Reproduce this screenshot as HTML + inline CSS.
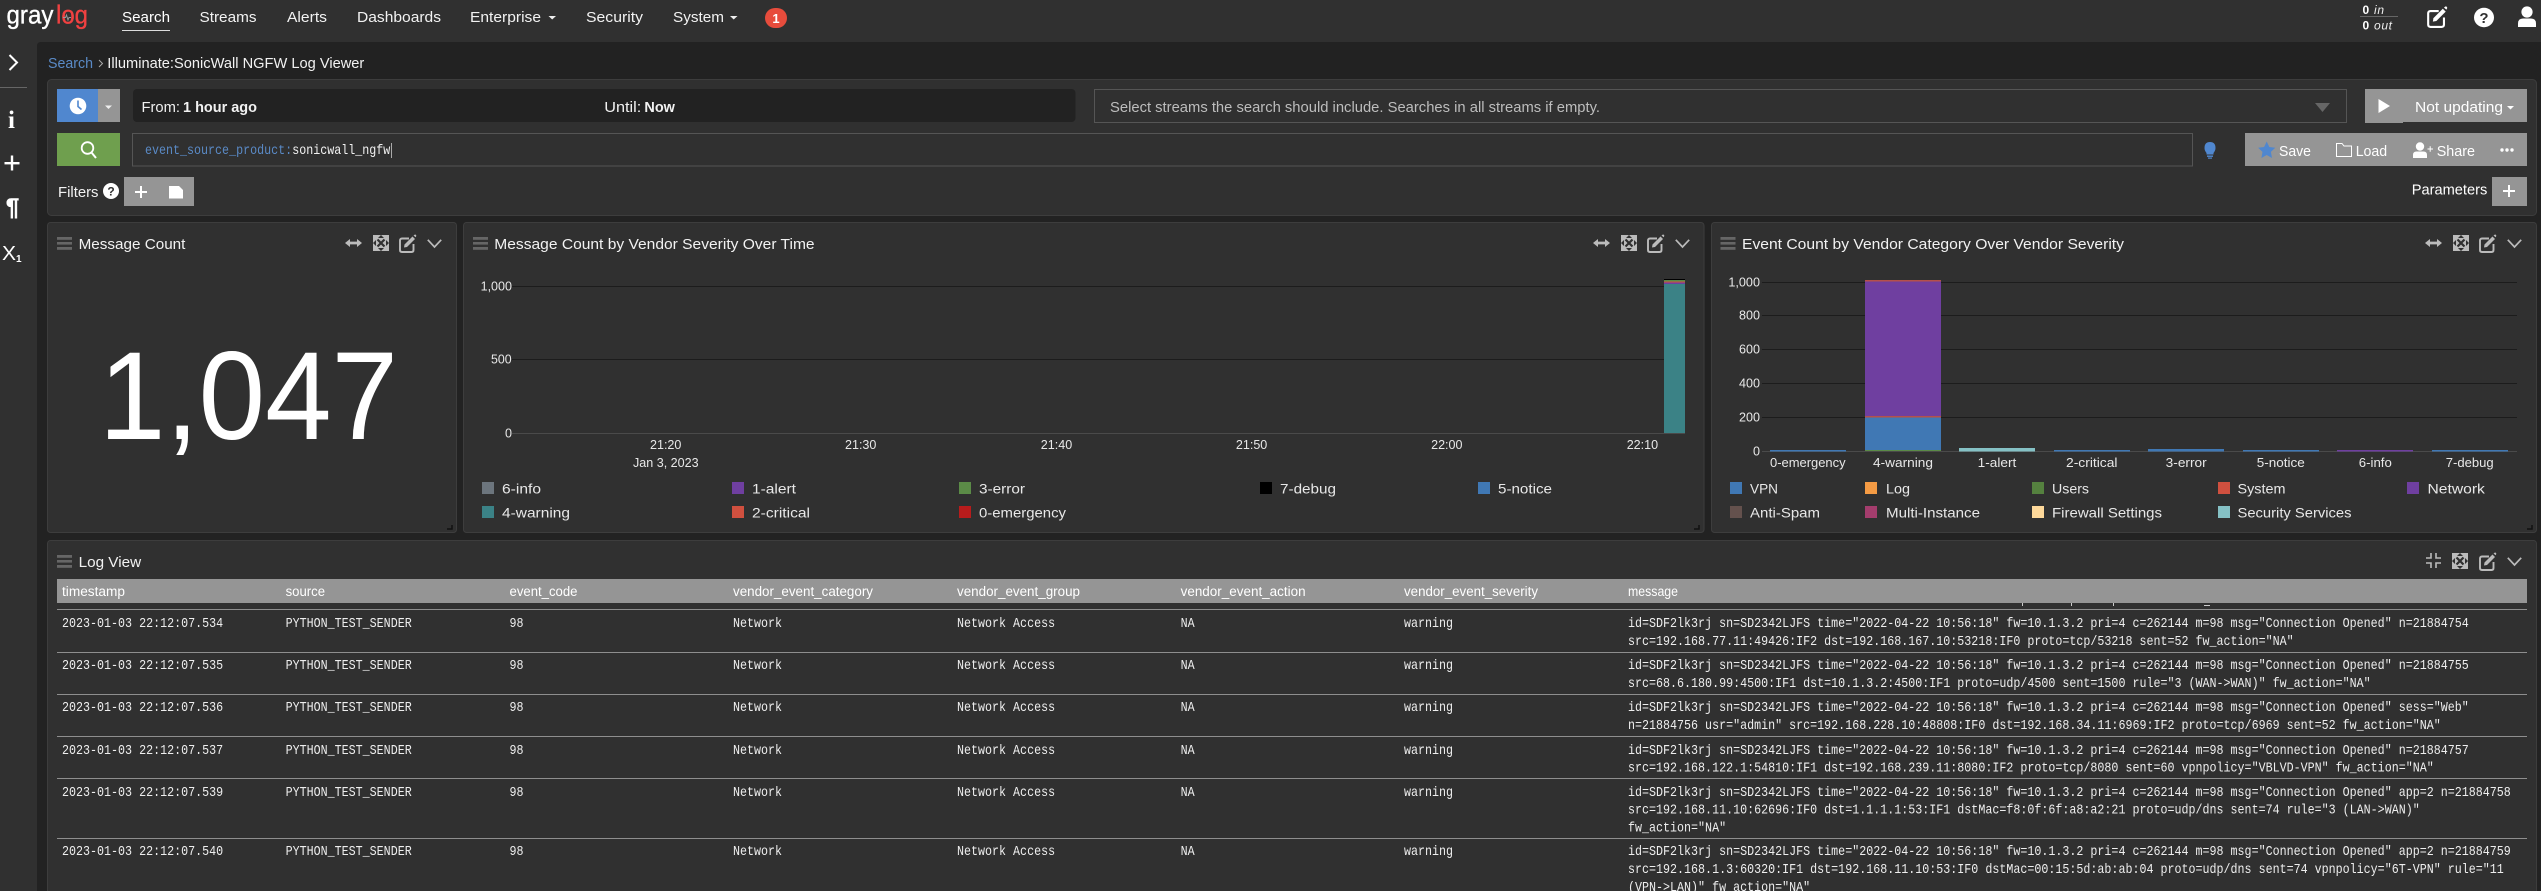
<!DOCTYPE html>
<html lang="en">
<head>
<meta charset="utf-8">
<title>Graylog - Illuminate:SonicWall NGFW Log Viewer</title>
<style>
html,body{margin:0;padding:0;background:#222;width:2541px;height:891px;overflow:hidden}
svg{display:block}
text{font-family:"Liberation Sans",sans-serif;fill:#f2f2f2;white-space:pre}
.nav{font-size:15px}
.ti{font-size:15px}
.ax{font-size:13px;fill:#e8e8e8}
.lg{font-size:14px;fill:#e8e8e8}
.th{font-size:13.5px;fill:#fff}
.m{font-family:"Liberation Mono",monospace;font-size:13.43px;fill:#eee;transform-box:fill-box;transform-origin:0 0;transform:scaleX(.87)}
.b{font-weight:bold}
.panel{fill:#303030;stroke:#3d3d3d;stroke-width:1}
.sep{fill:#8e8e8e}
.grid{fill:#1c1c1c}
</style>
</head>
<body>
<svg xmlns="http://www.w3.org/2000/svg" width="2541" height="891" viewBox="0 0 2541 891">
<defs>
<g id="ham" fill="#666"><rect x="0" y="0" width="15" height="2.8"/><rect x="0" y="5" width="15" height="2.6"/><rect x="0" y="10" width="15" height="2.8"/></g>
<g id="lr"><path d="M0 4 L5 0 V2.6 H12 V0 L17 4 L12 8 V5.4 H5 V8 Z" fill="#bbb"/></g>
<g id="fc"><rect x="0" y="0" width="16" height="16" fill="#bbb"/><path d="M4.5 4.5 L11.5 11.5 M11.5 4.5 L4.5 11.5" stroke="#303030" stroke-width="2.2"/><path d="M8 0 L11 3 H5 Z M8 16 L11 13 H5 Z M0 8 L3 5 V11 Z M16 8 L13 5 V11 Z" fill="#303030"/></g>
<g id="ed"><path d="M10 3.5 H3 Q1 3.5 1 5.5 V15 Q1 17 3 17 H12.5 Q14.5 17 14.5 15 V9" fill="none" stroke="#bbb" stroke-width="1.9"/><path d="M5.5 9.5 L13.5 1.5 L16 4 L8 12 L5 12.5 Z" fill="#bbb"/><path d="M14.5 0.5 L15.5 -0.3 Q16.3 -0.8 17 0 Q17.7 .8 17 1.6 L16.6 2.2 Z" fill="#bbb"/></g>
<g id="ch"><path d="M0.8 0.8 L7.5 8 L14.2 0.8" fill="none" stroke="#bbb" stroke-width="1.7"/></g>
<g id="cp" fill="none" stroke="#bbb" stroke-width="1.6"><path d="M5 0 V5 H0 M10 0 V5 H15 M5 15 V10 H0 M10 15 V10 H15"/></g>
</defs>

<!-- page frame -->
<rect x="0" y="0" width="2541" height="891" fill="#222"/>
<rect x="0" y="0" width="2541" height="42" fill="#303030"/>
<rect x="0" y="42" width="37" height="849" fill="#303030"/>
<path d="M37 42 H41 Q37 42 37 46 Z" fill="#303030"/>

<!-- logo -->
<text x="6.5" y="23.500" font-size="26" textLength="47" lengthAdjust="spacingAndGlyphs" style="fill:#fff;stroke:#fff;stroke-width:.35">gray</text>
<text x="56" y="23.500" font-size="26" textLength="32" lengthAdjust="spacingAndGlyphs" style="fill:#f04141;stroke:#f04141;stroke-width:.35">log</text>
<path d="M63 17.500 H65.500 L66.500 15 L68 20 L69 17.500 H71" fill="none" stroke="#999" stroke-width="1"/>

<!-- nav -->
<text class="nav" x="122" y="22" textLength="48" lengthAdjust="spacingAndGlyphs" style="fill:#fff">Search</text>
<rect x="122" y="30" width="48" height="1" fill="#ddd"/>
<text class="nav" x="199.5" y="22" textLength="57" lengthAdjust="spacingAndGlyphs">Streams</text>
<text class="nav" x="287" y="22" textLength="40" lengthAdjust="spacingAndGlyphs">Alerts</text>
<text class="nav" x="357" y="22" textLength="84" lengthAdjust="spacingAndGlyphs">Dashboards</text>
<text class="nav" x="470" y="22" textLength="71" lengthAdjust="spacingAndGlyphs">Enterprise</text>
<path d="M548.5 16 H556 L552.2 19.5 Z" fill="#eee"/>
<text class="nav" x="586" y="22" textLength="57" lengthAdjust="spacingAndGlyphs">Security</text>
<text class="nav" x="673" y="22" textLength="51" lengthAdjust="spacingAndGlyphs">System</text>
<path d="M730 16 H737.5 L733.7 19.5 Z" fill="#eee"/>
<rect x="765" y="8" width="22" height="20" rx="10" fill="#e74c3c"/>
<text x="776" y="23" font-size="13" font-weight="bold" text-anchor="middle" style="fill:#fff">1</text>

<!-- nav right -->
<text x="2362.5" y="14" font-size="12" font-weight="bold" style="fill:#fff">0</text>
<text x="2374" y="14" font-size="12" font-style="italic" textLength="10" style="fill:#eee">in</text>
<rect x="2360" y="16" width="38" height="1" fill="#666"/>
<text x="2362.5" y="29.5" font-size="12" font-weight="bold" style="fill:#fff">0</text>
<text x="2374" y="29.5" font-size="12" font-style="italic" textLength="18" style="fill:#eee">out</text>
<g transform="translate(2427,7) scale(1.17)"><path d="M10 3.5 H3 Q1 3.5 1 5.5 V15 Q1 17 3 17 H12.5 Q14.5 17 14.5 15 V9" fill="none" stroke="#fff" stroke-width="1.8"/><path d="M5.5 9.5 L13.5 1.5 L16 4 L8 12 L5 12.5 Z" fill="#fff"/><path d="M14.5 0.5 L15.5 -0.3 Q16.3 -0.8 17 0 Q17.7 .8 17 1.6 L16.6 2.2 Z" fill="#fff"/></g>
<ellipse cx="2484" cy="17.5" rx="10" ry="9.7" fill="#fff"/>
<text x="2484" y="23" font-size="15" font-weight="bold" text-anchor="middle" style="fill:#303030">?</text>
<circle cx="2527" cy="12" r="5.6" fill="#fff"/>
<path d="M2518 27 V23.5 Q2518 18.5 2523 18.5 H2531 Q2536 18.5 2536 23.5 V27 Z" fill="#fff"/>

<!-- sidebar -->
<path d="M9.5 55 L17 62.5 L9.5 70" fill="none" stroke="#fff" stroke-width="2"/>
<rect x="0" y="87" width="27" height="1" fill="#666"/>
<text x="11.5" y="128" font-size="25" font-weight="bold" text-anchor="middle" style="font-family:'Liberation Serif',serif;fill:#fff">i</text>
<rect x="4.5" y="162" width="15" height="2.4" fill="#fff"/><rect x="10.8" y="155.5" width="2.4" height="15" fill="#fff"/>
<text x="12.5" y="215" font-size="24" font-weight="bold" text-anchor="middle" style="fill:#fff;stroke:#fff;stroke-width:.5">¶</text>
<text x="2" y="260" font-size="20" style="fill:#fff" textLength="14" lengthAdjust="spacingAndGlyphs">X</text>
<text x="16" y="262" font-size="10" font-weight="bold" style="fill:#fff">1</text>

<!-- breadcrumb -->
<text x="48" y="68" font-size="15" textLength="45" lengthAdjust="spacingAndGlyphs" style="fill:#5a8ac6">Search</text>
<path d="M99 60 L102.5 63.5 L99 67" fill="none" stroke="#aaa" stroke-width="1"/>
<text x="107.3" y="68" font-size="15" textLength="257" lengthAdjust="spacingAndGlyphs">Illuminate:SonicWall NGFW Log Viewer</text>

<!-- search panel -->
<rect class="panel" x="47.5" y="79.5" width="2489" height="136" rx="4"/>
<rect x="57" y="89" width="41" height="33" fill="#5087cf"/>
<rect x="98" y="89" width="22" height="33" fill="#959595"/>
<circle cx="78" cy="106" r="8.3" fill="#fff"/>
<path d="M78 100.5 V106.5 L81.5 109.5" fill="none" stroke="#5087cf" stroke-width="1.6"/>
<path d="M105 105.5 H112 L108.5 109 Z" fill="#eee"/>
<rect x="133" y="89" width="942.5" height="33" rx="4" fill="#222"/>
<text x="141.5" y="112" font-size="15" textLength="38.5" lengthAdjust="spacingAndGlyphs">From:</text>
<text x="183" y="112" font-size="15" font-weight="bold" textLength="74" lengthAdjust="spacingAndGlyphs">1 hour ago</text>
<text x="604.3" y="112" font-size="15" textLength="37" lengthAdjust="spacingAndGlyphs">Until:</text>
<text x="644.4" y="112" font-size="15" font-weight="bold" textLength="30.5" lengthAdjust="spacingAndGlyphs">Now</text>

<rect x="1094.5" y="89.5" width="1252" height="33" fill="none" stroke="#555"/>
<text x="1110" y="112" font-size="15" textLength="490" lengthAdjust="spacingAndGlyphs" style="fill:#bdbdbd">Select streams the search should include. Searches in all streams if empty.</text>
<path d="M2315 103 H2330 L2322.5 112 Z" fill="#666"/>

<rect x="2365" y="89" width="38" height="34" fill="#959595"/>
<rect x="2403" y="89" width="124" height="33" fill="#959595"/>
<path d="M2378.5 99 L2390 106 L2378.5 113 Z" fill="#fff"/>
<text x="2415" y="112" font-size="15" textLength="88" lengthAdjust="spacingAndGlyphs" style="fill:#fff">Not updating</text>
<path d="M2507 106 H2514 L2510.5 109.5 Z" fill="#fff"/>

<rect x="57" y="133" width="63" height="33" fill="#6f9f4e"/>
<circle cx="87.5" cy="148" r="5.8" fill="none" stroke="#fff" stroke-width="1.8"/>
<path d="M91.5 152.5 L96 158" stroke="#fff" stroke-width="2"/>
<rect x="132.5" y="133.5" width="2060" height="32.5" fill="none" stroke="#555"/>
<text class="m" x="145" y="154" style="fill:#5a8ac6">event_source_product:</text>
<text class="m" x="292.2" y="154" style="fill:#f2f2f2">sonicwall_ngfw</text>
<rect x="391" y="143" width="1" height="15" fill="#aaa"/>

<path d="M2210 142 Q2215.5 142 2215.5 148 Q2215.5 150.5 2213.5 153 V154.5 H2206.5 V153 Q2204.500 150.500 2204.500 148 Q2204.500 142 2210 142 Z" fill="#5087cf"/>
<rect x="2207" y="155.500" width="6" height="1.400" fill="#5087cf"/><rect x="2208" y="157.500" width="4" height="1.200" fill="#5087cf"/>

<rect x="2245" y="133" width="282" height="33" fill="#959595"/>
<path d="M2266.700 141.500 L2269.300 147 L2275.300 147.800 L2270.900 151.900 L2272 158 L2266.700 155 L2261.400 158 L2262.500 151.900 L2258.100 147.800 L2264.100 147 Z" fill="#5087cf"/>
<text x="2279" y="156" font-size="15" textLength="32" lengthAdjust="spacingAndGlyphs" style="fill:#fff">Save</text>
<path d="M2336.500 156.500 V143.500 H2342 L2344 146 H2351.500 V156.500 Z" fill="none" stroke="#fff" stroke-width="1"/>
<text x="2355.700" y="156" font-size="15" textLength="31.500" lengthAdjust="spacingAndGlyphs" style="fill:#fff">Load</text>
<circle cx="2420" cy="146.500" r="4.200" fill="#fff"/>
<path d="M2413 158 V155 Q2413 151.500 2416.500 151.500 H2423.500 Q2427 151.500 2427 155 V158 Z" fill="#fff"/>
<path d="M2427.500 149 H2433 M2430.200 146.200 V151.800" stroke="#fff" stroke-width="1"/>
<text x="2436.700" y="156" font-size="15" textLength="38.300" lengthAdjust="spacingAndGlyphs" style="fill:#fff">Share</text>
<circle cx="2502" cy="150" r="1.700" fill="#fff"/><circle cx="2507" cy="150" r="1.700" fill="#fff"/><circle cx="2512" cy="150" r="1.700" fill="#fff"/>

<text x="58" y="197" font-size="15" textLength="40.500" lengthAdjust="spacingAndGlyphs">Filters</text>
<circle cx="111" cy="191" r="8" fill="#fff"/>
<text x="111" y="195.500" font-size="12" font-weight="bold" text-anchor="middle" style="fill:#303030">?</text>
<rect x="124" y="177" width="70" height="29" fill="#959595"/>
<rect x="135" y="191" width="12" height="2" fill="#fff"/><rect x="140" y="186" width="2" height="12" fill="#fff"/>
<path d="M169 186 H179 L183 190 V198.500 H169 Z" fill="#fff"/>

<text x="2411.700" y="194.500" font-size="15" textLength="75.600" lengthAdjust="spacingAndGlyphs" style="fill:#fff">Parameters</text>
<rect x="2492" y="177" width="35" height="29" fill="#959595"/>
<rect x="2503" y="190" width="12" height="2" fill="#fff"/><rect x="2508" y="185" width="2" height="12" fill="#fff"/>

<!-- widget 1 -->
<rect class="panel" x="47.500" y="222.500" width="409" height="310" rx="3"/>
<use href="#ham" x="57" y="237"/>
<text class="ti" x="78.600" y="249" textLength="106.800" lengthAdjust="spacingAndGlyphs">Message Count</text>
<use href="#lr" x="345" y="239"/><use href="#fc" x="373" y="235"/><use href="#ed" x="399" y="235"/><use href="#ch" x="427" y="239"/>
<text x="99" y="439" font-size="125" textLength="299" lengthAdjust="spacingAndGlyphs" style="fill:#fff">1,047</text>
<path d="M452 525 V529 H447" fill="none" stroke="#111" stroke-width="1.500"/>

<!-- widget 2 -->
<rect class="panel" x="463.500" y="222.500" width="1240.500" height="310" rx="3"/>
<use href="#ham" x="473" y="237"/>
<text class="ti" x="494.300" y="249" textLength="320.300" lengthAdjust="spacingAndGlyphs">Message Count by Vendor Severity Over Time</text>
<use href="#lr" x="1593" y="239"/><use href="#fc" x="1621" y="235"/><use href="#ed" x="1647" y="235"/><use href="#ch" x="1675" y="239"/>
<rect class="grid" x="512" y="286" width="1173" height="1"/>
<rect class="grid" x="512" y="359" width="1173" height="1"/>
<rect x="512" y="433" width="1173" height="1" fill="#4a4a4a"/>
<rect x="1664" y="279" width="21" height="1" fill="#000"/>
<rect x="1664" y="280" width="21" height="1.500" fill="#5b8b47"/>
<rect x="1664" y="281.500" width="21" height="1" fill="#d0503f"/>
<rect x="1664" y="282.500" width="21" height="1.500" fill="#6f3fa0"/>
<rect x="1664" y="284" width="21" height="149" fill="#3b8286"/>
<text class="ax" x="480.600" y="290.500" textLength="31.400" lengthAdjust="spacingAndGlyphs">1,000</text>
<text class="ax" x="491" y="363.500" textLength="20.600" lengthAdjust="spacingAndGlyphs">500</text>
<text class="ax" x="505" y="437.500" textLength="7" lengthAdjust="spacingAndGlyphs">0</text>
<text class="ax" x="650" y="449" textLength="31.400" lengthAdjust="spacingAndGlyphs">21:20</text>
<text class="ax" x="633" y="467" textLength="65.600" lengthAdjust="spacingAndGlyphs">Jan 3, 2023</text>
<text class="ax" x="845" y="449" textLength="31.400" lengthAdjust="spacingAndGlyphs">21:30</text>
<text class="ax" x="1040.800" y="449" textLength="31.400" lengthAdjust="spacingAndGlyphs">21:40</text>
<text class="ax" x="1235.900" y="449" textLength="31.400" lengthAdjust="spacingAndGlyphs">21:50</text>
<text class="ax" x="1431.100" y="449" textLength="31.400" lengthAdjust="spacingAndGlyphs">22:00</text>
<text class="ax" x="1626.700" y="449" textLength="31.400" lengthAdjust="spacingAndGlyphs">22:10</text>

<rect x="482" y="482" width="12" height="12" fill="#6c757d"/><text class="lg" x="502" y="493.500" textLength="39" lengthAdjust="spacingAndGlyphs">6-info</text>
<rect x="732" y="482" width="12" height="12" fill="#6f3fa0"/><text class="lg" x="752" y="493.500" textLength="44" lengthAdjust="spacingAndGlyphs">1-alert</text>
<rect x="959" y="482" width="12" height="12" fill="#5b8b47"/><text class="lg" x="979" y="493.500" textLength="46" lengthAdjust="spacingAndGlyphs">3-error</text>
<rect x="1260" y="482" width="12" height="12" fill="#000"/><text class="lg" x="1280" y="493.500" textLength="56" lengthAdjust="spacingAndGlyphs">7-debug</text>
<rect x="1478" y="482" width="12" height="12" fill="#4078b4"/><text class="lg" x="1498" y="493.500" textLength="54" lengthAdjust="spacingAndGlyphs">5-notice</text>
<rect x="482" y="506" width="12" height="12" fill="#3b8286"/><text class="lg" x="502" y="517.500" textLength="68" lengthAdjust="spacingAndGlyphs">4-warning</text>
<rect x="732" y="506" width="12" height="12" fill="#d0503f"/><text class="lg" x="752" y="517.500" textLength="58" lengthAdjust="spacingAndGlyphs">2-critical</text>
<rect x="959" y="506" width="12" height="12" fill="#b81c1c"/><text class="lg" x="979" y="517.500" textLength="87" lengthAdjust="spacingAndGlyphs">0-emergency</text>
<path d="M1699 525 V529 H1694" fill="none" stroke="#111" stroke-width="1.500"/>

<!-- widget 3 -->
<rect class="panel" x="1711.500" y="222.500" width="825" height="310" rx="3"/>
<use href="#ham" x="1720.500" y="237"/>
<text class="ti" x="1742" y="249" textLength="382" lengthAdjust="spacingAndGlyphs">Event Count by Vendor Category Over Vendor Severity</text>
<use href="#lr" x="2425" y="239"/><use href="#fc" x="2453" y="235"/><use href="#ed" x="2479" y="235"/><use href="#ch" x="2507" y="239"/>
<rect class="grid" x="1762" y="282" width="755" height="1"/>
<rect class="grid" x="1762" y="315" width="755" height="1"/>
<rect class="grid" x="1762" y="349" width="755" height="1"/>
<rect class="grid" x="1762" y="383" width="755" height="1"/>
<rect class="grid" x="1762" y="417" width="755" height="1"/>
<rect x="1762" y="451" width="755" height="1" fill="#4a4a4a"/>
<rect x="1865" y="280" width="76" height="1.500" fill="#b5504a"/>
<rect x="1865" y="281.500" width="76" height="134.500" fill="#6f3fa0"/>
<rect x="1865" y="416" width="76" height="1.500" fill="#b5504a"/>
<rect x="1865" y="417.500" width="76" height="32.500" fill="#4078b4"/>
<rect x="1865" y="450" width="76" height="1" fill="#5b8b47"/>
<rect x="1770" y="450" width="76" height="1.500" fill="#4078b4"/>
<rect x="1959" y="448" width="76" height="3.500" fill="#85c1c5"/>
<rect x="2054" y="450" width="76" height="1.500" fill="#4078b4"/>
<rect x="2148" y="449" width="76" height="2.500" fill="#4078b4"/>
<rect x="2243" y="450" width="76" height="1.500" fill="#4078b4"/>
<rect x="2337" y="450" width="76" height="1.500" fill="#6f3fa0"/>
<rect x="2432" y="450" width="76" height="1.500" fill="#4078b4"/>
<text class="ax" x="1728.400" y="286.500" textLength="31.600" lengthAdjust="spacingAndGlyphs">1,000</text>
<text class="ax" x="1739" y="319.500" textLength="21" lengthAdjust="spacingAndGlyphs">800</text>
<text class="ax" x="1739" y="353.500" textLength="21" lengthAdjust="spacingAndGlyphs">600</text>
<text class="ax" x="1739" y="387.500" textLength="21" lengthAdjust="spacingAndGlyphs">400</text>
<text class="ax" x="1739" y="421.500" textLength="21" lengthAdjust="spacingAndGlyphs">200</text>
<text class="ax" x="1753" y="455.500" textLength="7" lengthAdjust="spacingAndGlyphs">0</text>
<text class="ax" x="1770" y="467" textLength="75.600" lengthAdjust="spacingAndGlyphs">0-emergency</text>
<text class="ax" x="1873" y="467" textLength="60" lengthAdjust="spacingAndGlyphs">4-warning</text>
<text class="ax" x="1977.700" y="467" textLength="38.600" lengthAdjust="spacingAndGlyphs">1-alert</text>
<text class="ax" x="2066" y="467" textLength="51.500" lengthAdjust="spacingAndGlyphs">2-critical</text>
<text class="ax" x="2165.700" y="467" textLength="41" lengthAdjust="spacingAndGlyphs">3-error</text>
<text class="ax" x="2256.800" y="467" textLength="48" lengthAdjust="spacingAndGlyphs">5-notice</text>
<text class="ax" x="2358.800" y="467" textLength="33" lengthAdjust="spacingAndGlyphs">6-info</text>
<text class="ax" x="2445.700" y="467" textLength="48" lengthAdjust="spacingAndGlyphs">7-debug</text>

<rect x="1730" y="482" width="12" height="12" fill="#4078b4"/><text class="lg" x="1750" y="493.500" textLength="28" lengthAdjust="spacingAndGlyphs">VPN</text>
<rect x="1865" y="482" width="12" height="12" fill="#f49b44"/><text class="lg" x="1886" y="493.500" textLength="24" lengthAdjust="spacingAndGlyphs">Log</text>
<rect x="2032" y="482" width="12" height="12" fill="#55813f"/><text class="lg" x="2052" y="493.500" textLength="37" lengthAdjust="spacingAndGlyphs">Users</text>
<rect x="2218" y="482" width="12" height="12" fill="#d0503f"/><text class="lg" x="2237.500" y="493.500" textLength="48" lengthAdjust="spacingAndGlyphs">System</text>
<rect x="2407" y="482" width="12" height="12" fill="#6f3fa0"/><text class="lg" x="2427.500" y="493.500" textLength="57.400" lengthAdjust="spacingAndGlyphs">Network</text>
<rect x="1730" y="506" width="12" height="12" fill="#64514d"/><text class="lg" x="1750" y="517.500" textLength="70" lengthAdjust="spacingAndGlyphs">Anti-Spam</text>
<rect x="1865" y="506" width="12" height="12" fill="#a43d6d"/><text class="lg" x="1886" y="517.500" textLength="94" lengthAdjust="spacingAndGlyphs">Multi-Instance</text>
<rect x="2032" y="506" width="12" height="12" fill="#fdd89a"/><text class="lg" x="2052" y="517.500" textLength="110" lengthAdjust="spacingAndGlyphs">Firewall Settings</text>
<rect x="2218" y="506" width="12" height="12" fill="#85c1c5"/><text class="lg" x="2237.500" y="517.500" textLength="114" lengthAdjust="spacingAndGlyphs">Security Services</text>
<path d="M2532 525 V529 H2527" fill="none" stroke="#111" stroke-width="1.500"/>

<!-- log view -->
<rect class="panel" x="47.500" y="540.500" width="2489" height="360" rx="3"/>
<use href="#ham" x="57" y="555"/>
<text class="ti" x="78.600" y="567" textLength="62.500" lengthAdjust="spacingAndGlyphs">Log View</text>
<use href="#cp" x="2426" y="553"/><use href="#fc" x="2452" y="553"/><use href="#ed" x="2479" y="553"/><use href="#ch" x="2507" y="557"/>

<rect x="57" y="579" width="2470" height="24" fill="#959595"/>
<text class="th" x="62" y="596" textLength="63" lengthAdjust="spacingAndGlyphs">timestamp</text>
<text class="th" x="285.600" y="596" textLength="39.500" lengthAdjust="spacingAndGlyphs">source</text>
<text class="th" x="509.500" y="596" textLength="68" lengthAdjust="spacingAndGlyphs">event_code</text>
<text class="th" x="733" y="596" textLength="140" lengthAdjust="spacingAndGlyphs">vendor_event_category</text>
<text class="th" x="957" y="596" textLength="123" lengthAdjust="spacingAndGlyphs">vendor_event_group</text>
<text class="th" x="1180.600" y="596" textLength="125" lengthAdjust="spacingAndGlyphs">vendor_event_action</text>
<text class="th" x="1404" y="596" textLength="134" lengthAdjust="spacingAndGlyphs">vendor_event_severity</text>
<text class="th" x="1628" y="596" textLength="50" lengthAdjust="spacingAndGlyphs">message</text>
<rect x="2022" y="603" width="1" height="3" fill="#ccc"/><rect x="2071" y="603" width="1" height="3" fill="#ccc"/><rect x="2113" y="603" width="1" height="3" fill="#ccc"/><rect x="2204" y="605" width="6" height="1" fill="#ccc"/>

<rect class="sep" x="57" y="609" width="2470" height="1"/>
<rect class="sep" x="57" y="652" width="2470" height="1"/>
<rect class="sep" x="57" y="694" width="2470" height="1"/>
<rect class="sep" x="57" y="736" width="2470" height="1"/>
<rect class="sep" x="57" y="778" width="2470" height="1"/>
<rect class="sep" x="57" y="838" width="2470" height="1"/>

<g class="r">
<text class="m" x="62" y="627">2023-01-03 22:12:07.534</text><text class="m" x="285.600" y="627">PYTHON_TEST_SENDER</text><text class="m" x="509.500" y="627">98</text><text class="m" x="733" y="627">Network</text><text class="m" x="957" y="627">Network Access</text><text class="m" x="1180.600" y="627">NA</text><text class="m" x="1404" y="627">warning</text>
<text class="m" x="1628" y="627">id=SDF2lk3rj sn=SD2342LJFS time="2022-04-22 10:56:18" fw=10.1.3.2 pri=4 c=262144 m=98 msg="Connection Opened" n=21884754</text>
<text class="m" x="1628" y="645">src=192.168.77.11:49426:IF2 dst=192.168.167.10:53218:IF0 proto=tcp/53218 sent=52 fw_action="NA"</text>

<text class="m" x="62" y="669">2023-01-03 22:12:07.535</text><text class="m" x="285.600" y="669">PYTHON_TEST_SENDER</text><text class="m" x="509.500" y="669">98</text><text class="m" x="733" y="669">Network</text><text class="m" x="957" y="669">Network Access</text><text class="m" x="1180.600" y="669">NA</text><text class="m" x="1404" y="669">warning</text>
<text class="m" x="1628" y="669">id=SDF2lk3rj sn=SD2342LJFS time="2022-04-22 10:56:18" fw=10.1.3.2 pri=4 c=262144 m=98 msg="Connection Opened" n=21884755</text>
<text class="m" x="1628" y="687">src=68.6.180.99:4500:IF1 dst=10.1.3.2:4500:IF1 proto=udp/4500 sent=1500 rule="3 (WAN-&gt;WAN)" fw_action="NA"</text>

<text class="m" x="62" y="711">2023-01-03 22:12:07.536</text><text class="m" x="285.600" y="711">PYTHON_TEST_SENDER</text><text class="m" x="509.500" y="711">98</text><text class="m" x="733" y="711">Network</text><text class="m" x="957" y="711">Network Access</text><text class="m" x="1180.600" y="711">NA</text><text class="m" x="1404" y="711">warning</text>
<text class="m" x="1628" y="711">id=SDF2lk3rj sn=SD2342LJFS time="2022-04-22 10:56:18" fw=10.1.3.2 pri=4 c=262144 m=98 msg="Connection Opened" sess="Web"</text>
<text class="m" x="1628" y="729">n=21884756 usr="admin" src=192.168.228.10:48808:IF0 dst=192.168.34.11:6969:IF2 proto=tcp/6969 sent=52 fw_action="NA"</text>

<text class="m" x="62" y="754">2023-01-03 22:12:07.537</text><text class="m" x="285.600" y="754">PYTHON_TEST_SENDER</text><text class="m" x="509.500" y="754">98</text><text class="m" x="733" y="754">Network</text><text class="m" x="957" y="754">Network Access</text><text class="m" x="1180.600" y="754">NA</text><text class="m" x="1404" y="754">warning</text>
<text class="m" x="1628" y="754">id=SDF2lk3rj sn=SD2342LJFS time="2022-04-22 10:56:18" fw=10.1.3.2 pri=4 c=262144 m=98 msg="Connection Opened" n=21884757</text>
<text class="m" x="1628" y="771.500">src=192.168.122.1:54810:IF1 dst=192.168.239.11:8080:IF2 proto=tcp/8080 sent=60 vpnpolicy="VBLVD-VPN" fw_action="NA"</text>

<text class="m" x="62" y="796">2023-01-03 22:12:07.539</text><text class="m" x="285.600" y="796">PYTHON_TEST_SENDER</text><text class="m" x="509.500" y="796">98</text><text class="m" x="733" y="796">Network</text><text class="m" x="957" y="796">Network Access</text><text class="m" x="1180.600" y="796">NA</text><text class="m" x="1404" y="796">warning</text>
<text class="m" x="1628" y="796">id=SDF2lk3rj sn=SD2342LJFS time="2022-04-22 10:56:18" fw=10.1.3.2 pri=4 c=262144 m=98 msg="Connection Opened" app=2 n=21884758</text>
<text class="m" x="1628" y="813.500">src=192.168.11.10:62696:IF0 dst=1.1.1.1:53:IF1 dstMac=f8:0f:6f:a8:a2:21 proto=udp/dns sent=74 rule="3 (LAN-&gt;WAN)"</text>
<text class="m" x="1628" y="831.500">fw_action="NA"</text>

<text class="m" x="62" y="855">2023-01-03 22:12:07.540</text><text class="m" x="285.600" y="855">PYTHON_TEST_SENDER</text><text class="m" x="509.500" y="855">98</text><text class="m" x="733" y="855">Network</text><text class="m" x="957" y="855">Network Access</text><text class="m" x="1180.600" y="855">NA</text><text class="m" x="1404" y="855">warning</text>
<text class="m" x="1628" y="855">id=SDF2lk3rj sn=SD2342LJFS time="2022-04-22 10:56:18" fw=10.1.3.2 pri=4 c=262144 m=98 msg="Connection Opened" app=2 n=21884759</text>
<text class="m" x="1628" y="873">src=192.168.1.3:60320:IF1 dst=192.168.11.10:53:IF0 dstMac=00:15:5d:ab:ab:04 proto=udp/dns sent=74 vpnpolicy="6T-VPN" rule="11</text>
<text class="m" x="1628" y="891">(VPN-&gt;LAN)" fw_action="NA"</text>
</g>
</svg>
</body>
</html>
